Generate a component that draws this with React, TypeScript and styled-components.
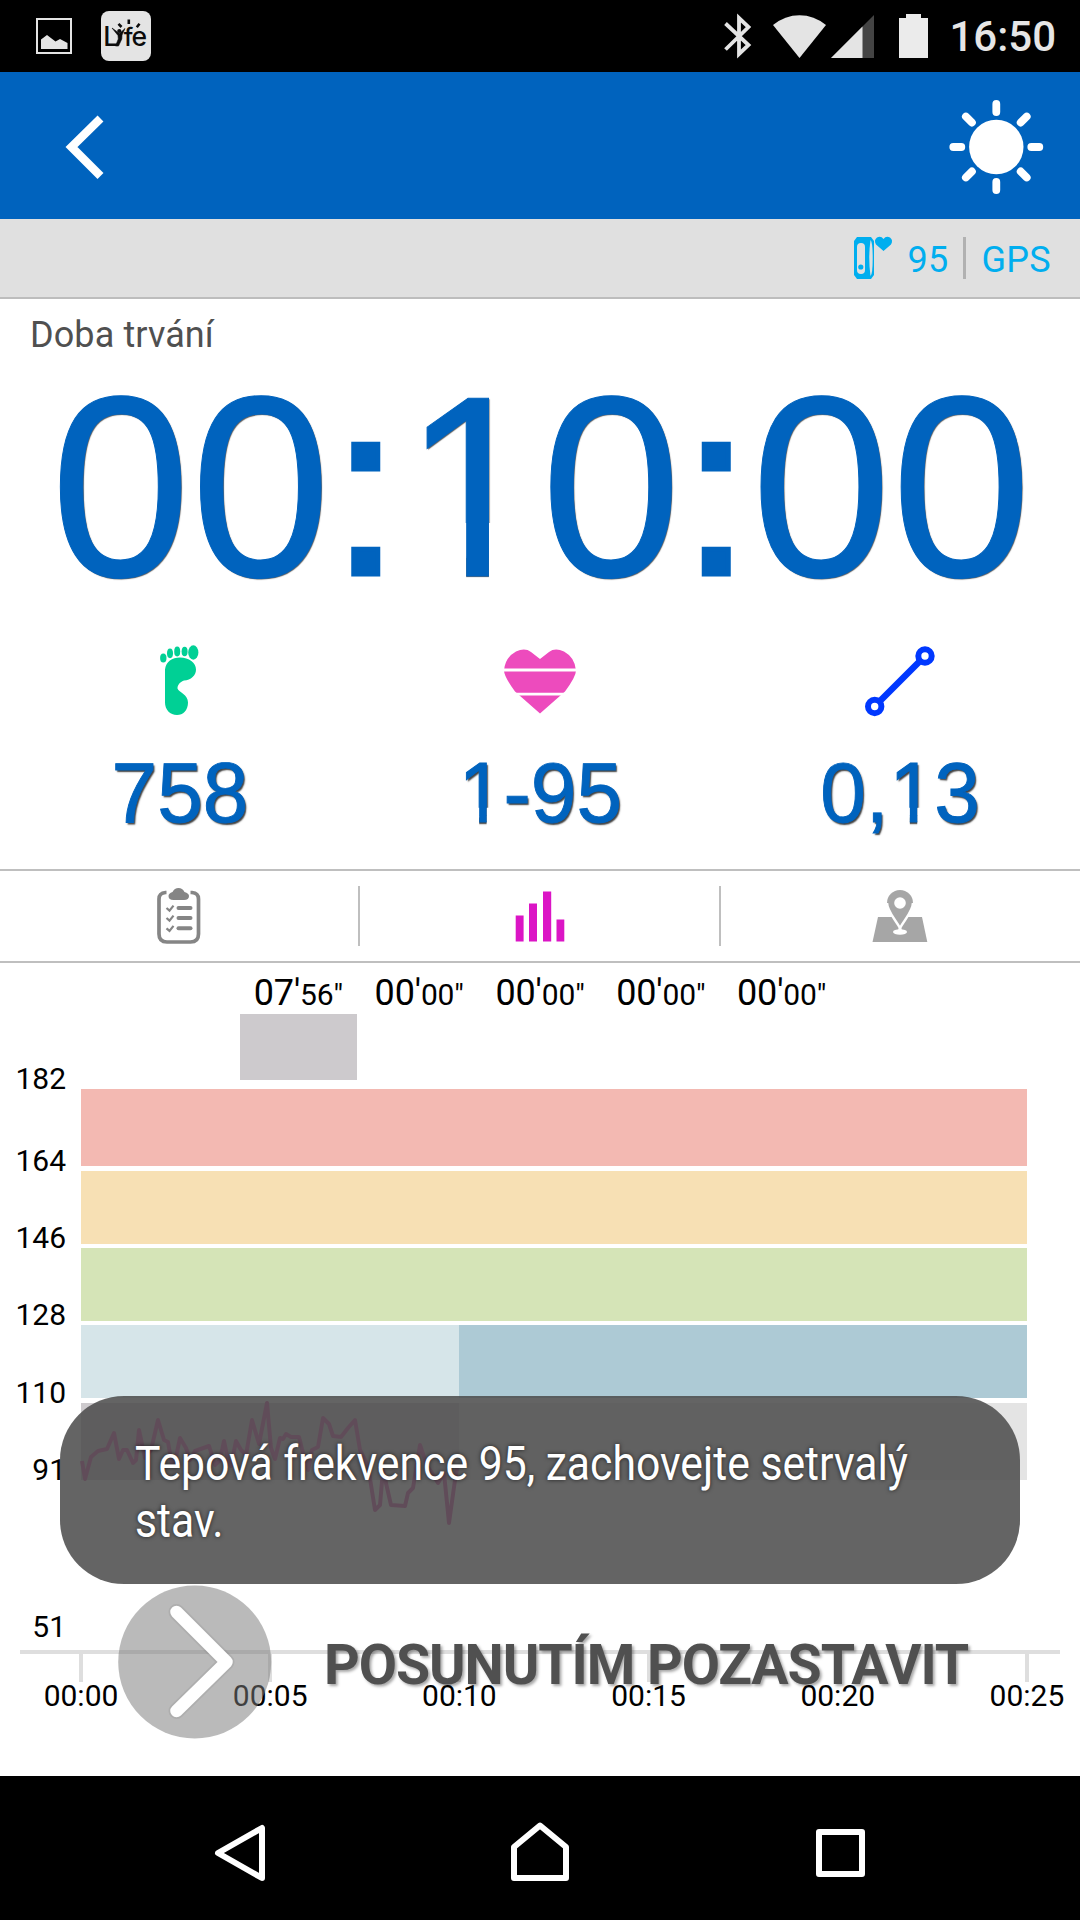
import React from "react";
import styled, { createGlobalStyle } from "styled-components";

const GlobalStyle = createGlobalStyle`
  * { box-sizing: border-box; }
  body { margin: 0; background: #fff; }
  svg { display: block; flex: none; overflow: visible; }
`;

const Screen = styled.div`
  position: relative;
  width: 1080px;
  height: 1920px;
  display: flex;
  flex-direction: column;
  overflow: hidden;
  background: #fff;
  color: #000;
  font-family: Roboto, "Noto Sans", sans-serif;
`;

const StatusBar = styled.header`
  height: 72px;
  flex: none;
  display: flex;
  align-items: center;
  justify-content: space-between;
  padding: 0 24px 0 36px;
  background: #000;
`;

const StatusGroup = styled.div<{ $gap: number }>`
  display: flex;
  align-items: center;
  gap: ${(p) => p.$gap}px;
`;

const SignalSlot = styled.div`
  margin-left: 5px;
`;

const Clock = styled.span`
  margin-left: 21px;
  padding-top: 2px;
  font-size: 42px;
  line-height: 50px;
  font-weight: 500;
  color: #e6e6e6;
`;

const AppBar = styled.div`
  height: 147px;
  flex: none;
  display: flex;
  align-items: center;
  justify-content: space-between;
  padding: 3px 36px 0 66px;
  background: #0063be;
`;

const IconButton = styled.button`
  border: 0;
  padding: 0;
  background: none;
`;

const SensorBar = styled.div`
  height: 80px;
  flex: none;
  display: flex;
  align-items: center;
  justify-content: flex-end;
  padding-right: 29px;
  border-bottom: 2px solid #bdbdbd;
  background: #e0e0e0;
  color: #00aeef;
`;

const SensorText = styled.span`
  padding-top: 3px;
  font-size: 36px;
  line-height: 42px;
  letter-spacing: 0.3px;
`;

const SensorReading = styled(SensorText)`
  margin-left: 14px;
`;

const SensorDivider = styled.i`
  width: 3px;
  height: 42px;
  margin: 0 15px;
  background: #b1b1b1;
`;

const DurationLabel = styled.div`
  height: 72px;
  flex: none;
  padding-left: 30px;
  font-size: 36px;
  line-height: 72px;
  letter-spacing: 0.1px;
  color: #505050;
`;

const Duration = styled.div`
  height: 236px;
  flex: none;
  padding-left: 2px;
  text-align: center;
  white-space: nowrap;
  font-family: "Liberation Sans", Arial, sans-serif;
  font-size: 252px;
  line-height: 236px;
  color: #0063be;
  -webkit-text-stroke: 1px #0063be;
  text-shadow: 1px 1px 1px rgba(0, 0, 0, 0.65);
  transform: scaleY(1.025);
  transform-origin: 50% 205px;
`;

const Colon = styled.span`
  display: inline-block;
  line-height: inherit;
  -webkit-text-stroke-width: 5px;
  transform: translateY(-2px) scaleY(0.95);
  transform-origin: 50% 205px;
`;

/* The "one" is trimmed to a plain stem without its base bar. */
const One = styled.span`
  display: inline-block;
  line-height: inherit;
  clip-path: polygon(0 0, 100% 0, 100% 65%, 61.4% 65%, 61.4% 110%, 45.2% 110%, 45.2% 65%, 0 65%);
  transform: translateX(0.008em);
`;

const Metrics = styled.section`
  height: 262px;
  flex: none;
  display: grid;
  grid-template-columns: repeat(3, 1fr);
  padding-top: 38px;
`;

const Metric = styled.div`
  display: flex;
  flex-direction: column;
  align-items: center;
  gap: 31px;
`;

const MetricValue = styled.span`
  font-family: "Liberation Sans", Arial, sans-serif;
  font-size: 82px;
  line-height: 96px;
  color: #0063be;
  -webkit-text-stroke: 0.9px #0063be;
  text-shadow: 1.5px 2px 1.5px rgba(0, 0, 0, 0.75);
  transform: scaleY(1.04);
  transform-origin: 50% 76px;
`;

const Tabs = styled.nav`
  height: 94px;
  flex: none;
  display: grid;
  grid-template-columns: 358px 2px 359px 2px 358px;
  align-items: center;
  justify-items: center;
  border-top: 2px solid #bfbfbf;
  border-bottom: 2px solid #bfbfbf;
`;

const TabDivider = styled.i`
  width: 2px;
  height: 60px;
  background: #bfbfbf;
`;

const Chart = styled.section`
  position: relative;
  flex: 1;
  display: flex;
  flex-direction: column;
`;

const ZoneTimes = styled.div`
  height: 126px;
  flex: none;
  display: grid;
  grid-template-columns: repeat(5, 120.8px);
  padding-left: 238px;
`;

const ZoneTime = styled.div`
  display: flex;
  flex-direction: column;
  align-items: center;
`;

const ZoneText = styled.span`
  height: 51px;
  font-size: 36px;
  line-height: 60px;
  letter-spacing: -0.15px;
  white-space: nowrap;
`;

const Seconds = styled.span`
  font-size: 30px;
`;

const ZoneBar = styled.i<{ $height: number }>`
  width: 117px;
  height: ${(p) => p.$height}px;
  background: #cdcacd;
`;

const ZoneRow = styled.div<{ $height: number }>`
  height: ${(p) => p.$height}px;
  flex: none;
  display: grid;
  grid-template-columns: 66px 946px;
  column-gap: 15px;
  align-items: start;
`;

const AxisLabel = styled.span`
  margin-top: -25px;
  text-align: right;
  font-size: 30px;
  line-height: 30px;
`;

const Band = styled.div<{ $height: number; $color: string; $elapsed: string }>`
  height: ${(p) => p.$height}px;
  background: linear-gradient(90deg, ${(p) => p.$elapsed} 378px, ${(p) => p.$color} 378px);
`;

const HeartTrace = styled.svg`
  position: absolute;
  left: 0;
  top: 437px;
`;

const TimeAxis = styled.div`
  display: flex;
  justify-content: space-between;
  margin: 0 20px;
  padding: 0 33px 0 61px;
  border-top: 4px solid #dedede;
`;

const Tick = styled.div`
  width: 0;
  display: flex;
  flex-direction: column;
  align-items: center;
  font-size: 30px;
  line-height: 28px;

  &::before {
    content: "";
    flex: none;
    width: 4px;
    height: 28px;
    background: #dedede;
  }
`;

const SlideToPause = styled.div`
  position: absolute;
  left: 118px;
  top: 1585px;
  display: flex;
  align-items: center;
`;

const SlideText = styled.span`
  margin-left: 52px;
  padding-top: 7px;
  font-size: 55.5px;
  line-height: 66px;
  font-weight: 700;
  letter-spacing: -1.05px;
  white-space: nowrap;
  color: #505050;
  text-shadow: 2px 2px 3px rgba(0, 0, 0, 0.35);
`;

const Toast = styled.div`
  position: absolute;
  left: 60px;
  top: 1396px;
  width: 960px;
  height: 188px;
  padding: 39px 75px;
  border-radius: 64px;
  background: rgba(77, 77, 77, 0.87);
`;

const ToastText = styled.p`
  margin: 0;
  width: 900px;
  font-size: 48px;
  line-height: 57px;
  color: #fff;
  text-shadow: 0 0 5px rgba(0, 0, 0, 0.7);
  transform: scaleX(0.8895);
  transform-origin: 0 0;
`;

const NavBar = styled.footer`
  height: 144px;
  flex: none;
  display: flex;
  align-items: center;
  justify-content: space-between;
  padding: 8px 214px 0 214px;
  background: #000;
`;

const zoneTimes = [
  { min: "07", sec: "56", height: 66 },
  { min: "00", sec: "00", height: 0 },
  { min: "00", sec: "00", height: 0 },
  { min: "00", sec: "00", height: 0 },
  { min: "00", sec: "00", height: 0 },
];

const zones = [
  { bpm: 182, row: 82, band: 77, color: "#f3b9b2", elapsed: "#f3b9b2" },
  { bpm: 164, row: 77, band: 73, color: "#f7e0b4", elapsed: "#f7e0b4" },
  { bpm: 146, row: 77, band: 73, color: "#d5e4b7", elapsed: "#d5e4b7" },
  { bpm: 128, row: 78, band: 73, color: "#adcad5", elapsed: "#d6e5e9" },
  { bpm: 110, row: 77, band: 77, color: "#e4e4e4", elapsed: "#cdcacd" },
  { bpm: 91, row: 157, band: 0, color: "#fff", elapsed: "#fff" },
  { bpm: 51, row: 13, band: 0, color: "#fff", elapsed: "#fff" },
];

const ticks = ["00:00", "00:05", "00:10", "00:15", "00:20", "00:25"];

const trace =
  "82,1461 85,1479 91,1457 98,1451 107,1449 114,1433 119,1459 123,1450 127,1450 133,1463 136,1460 139,1430 145,1458 151,1450 158,1420 164,1440 168,1442 172,1465 176,1457 180,1438 186,1448 190,1460 195,1451 209,1446 215,1465 220,1460 224,1441 228,1460 231,1466 236,1441 241,1450 246,1455 252,1420 259,1444 267,1403 271,1448 275,1459 280,1438 283,1439 286,1434 291,1437 299,1437 303,1453 308,1470 312,1450 318,1447 323,1418 329,1424 333,1436 341,1437 348,1428 355,1420 360,1450 368,1466 375,1510 380,1505 383,1470 391,1505 405,1506 408,1493 413,1488 420,1445 427,1466 432,1473 438,1483 444,1473 449,1523 455,1480 457,1468";

const GalleryIcon = () => (
  <svg width="36" height="36" viewBox="36 18 36 36">
    <rect x="37" y="19" width="34" height="34" fill="none" stroke="#e4e4e4" strokeWidth="2" />
    <path d="M41 49V39.5L47 35L55.5 41.5L60 39L67.5 43V49Z" fill="#e4e4e4" />
  </svg>
);

const LyfeIcon = () => (
  <svg width="50" height="50" viewBox="101 11 50 50">
    <rect x="101" y="11" width="50" height="50" rx="8" fill="#e4e4e4" />
    <g fontFamily="Inter, sans-serif" fontWeight="500" fill="#0c0c0c">
      <text x="103.3" y="46" fontSize="26.5">L</text>
      <text x="123.8" y="46" fontSize="25">f</text>
      <text x="131.5" y="46" fontSize="26.5">e</text>
    </g>
    <path d="M112 28L118 35.5L118.3 39L115.5 46H118.5L121.8 39L122 35L125 28.5L119.5 33.5Z" fill="#0c0c0c" stroke="#0c0c0c" strokeWidth="0.6" />
    <circle cx="119.3" cy="31" r="2.1" fill="#0c0c0c" />
    <path d="M128.8 19.5V24M118.5 23.8L121.5 27M139.5 23.8L136.8 27.2" stroke="#0c0c0c" strokeWidth="2.6" />
  </svg>
);

const BluetoothIcon = () => (
  <svg width="29" height="44" viewBox="723 14 29 44">
    <path d="M725.5 23.5L748.5 45L739 54V18L748.5 27L725.5 49.5" fill="none" stroke="#e4e4e4" strokeWidth="3.8" />
  </svg>
);

const WifiIcon = () => (
  <svg width="53" height="43" viewBox="773 14 53 43">
    <path d="M773 24Q785 14.2 799.5 14.2T826 24L799.5 57Z" fill="#e4e4e4" />
  </svg>
);

const SignalIcon = () => (
  <svg width="43" height="43" viewBox="831 14 43 43">
    <path d="M831 57L874 14V57Z" fill="#444" />
    <path d="M831 57L862.5 25.5V57Z" fill="#e4e4e4" />
  </svg>
);

const BatteryIcon = () => (
  <svg width="29" height="44" viewBox="899 14 29 44">
    <path d="M906 14H921V18H928V58H899V18H906Z" fill="#ebebeb" />
  </svg>
);

const BackIcon = () => (
  <svg width="38" height="64" viewBox="66 115 38 64">
    <path d="M100.5 118.5L71.5 147L100.5 176" fill="none" stroke="#fff" strokeWidth="8.4" />
  </svg>
);

const SunIcon = () => (
  <svg width="96" height="96" viewBox="-48.3 -48 96 96" stroke="#fff" strokeWidth="7.8" strokeLinecap="round">
    <circle r="27.2" fill="#fff" stroke="none" />
    {[0, 90, 180, 270].map((a) => (
      <path key={a} d="M0 -43V-35" transform={`rotate(${a})`} />
    ))}
    {[45, 135, 225, 315].map((a) => (
      <path key={a} d="M0 -43V-34.5" transform={`rotate(${a})`} />
    ))}
  </svg>
);

const BandIcon = () => (
  <svg width="40" height="42" viewBox="854 237 40 42" fill="#00aeef">
    <path d="M858 237H872L875 241V275L872 279H858L855 275V241Z" />
    <rect x="858" y="243" width="8" height="31" rx="4" fill="#e0e0e0" />
    <circle cx="861.8" cy="267" r="2.6" />
    <path d="M871.5 240Q869 258 871.5 276Q873.7 274 873.7 258T871.5 240Z" fill="#e0e0e0" />
    <path d="M884.5 251L877 244.5Q874.5 240 878 237.5Q882 235.5 884.5 239Q887 235.5 891 237.5Q894.5 240 892 244.5Z" />
  </svg>
);

const FootIcon = () => (
  <svg width="40" height="70" viewBox="160 645.5 40 70" fill="#00d095">
    <ellipse cx="163.3" cy="658.5" rx="3.2" ry="4.6" />
    <ellipse cx="170" cy="653.8" rx="3" ry="4.9" />
    <ellipse cx="177.2" cy="652" rx="3" ry="4.9" />
    <ellipse cx="184.6" cy="652" rx="3" ry="4.8" />
    <ellipse cx="193.3" cy="653" rx="5.1" ry="7.2" />
    <path d="M165 670C166 662 172 658 180 658C189 658 196 663 196 670C196 676 191 680.5 184 681C179 683 177.5 686 177.5 689C179 693 188 695 188 703C188 711 183 715.5 177 715.5C170 715.5 165 710 165 703Z" />
  </svg>
);

const HeartIcon = () => (
  <svg width="74" height="70" viewBox="503 645.5 74 70">
    <path d="M540 714L515 692Q504 677 504 671Q505 658 516 652Q525 648 531 652.5L540 659.5L549 652.5Q555 648 564 652Q575 658 576 671Q576 677 565 692Z" fill="#ed4bbd" />
    <path d="M503 670.5H577M503 694.7H577" stroke="#fff" strokeWidth="2.8" />
  </svg>
);

const DistanceIcon = () => (
  <svg width="72" height="70" viewBox="864.5 645 72 70" fill="none" stroke="#0038ff">
    <path d="M880 701.5L920.5 661" strokeWidth="6.6" />
    <circle cx="925.5" cy="656" r="6.7" strokeWidth="6" />
    <circle cx="875.2" cy="706.5" r="6.7" strokeWidth="6" />
  </svg>
);

const ChecklistIcon = () => (
  <svg width="46" height="58" viewBox="156.5 887 46 58" fill="none" stroke="#858585">
    <path d="M167 892.5H166Q159.5 893 159.5 899V934Q159.5 942 167.5 942H191Q199 942 199 934V899Q199 893 192.5 892.5H191" strokeWidth="3.7" />
    <path d="M169 896Q169 893.5 173 892Q175 888 179 888T185 892Q189.5 893.5 189.5 896Q189.5 900 184.5 900H174Q169 900 169 896Z" fill="#858585" stroke="none" />
    {[908, 918, 928.3].map((y) => (
      <g key={y}>
        <path d={`M179 ${y}H191`} strokeWidth="4" strokeLinecap="round" />
        <path d={`M167 ${y}l3 2.6l4 -5`} strokeWidth="2.2" />
      </g>
    ))}
  </svg>
);

const BarsIcon = () => (
  <svg width="50" height="52" viewBox="515 890.5 50 52" fill="#db15c5">
    <path d="M515.7 916H523.6V942H515.7ZM529 904H537V942H529ZM543 892H551.2V942H543ZM556.5 920H564.3V942H556.5Z" />
  </svg>
);

const MapIcon = () => (
  <svg width="56" height="54" viewBox="872 889 56 54" fill="#a6a6a6">
    <path d="M878 917H922L927.3 942H872.5Z" />
    <path
      d="M900 928C895 919 887 911 887 902.5A13 12.5 0 0 1 913 902.5C913 911 905 919 900 928Z"
      stroke="#fff"
      strokeWidth="2.4"
    />
    <path d="M887 903A13 13 0 0 1 913 903" />
    <circle cx="900" cy="903" r="5.8" fill="#fff" />
    <ellipse cx="900" cy="932" rx="7" ry="2.7" fill="#fff" />
    <path d="M899 926H901L902 931H898Z" fill="#fff" />
  </svg>
);

const SlideHandle = () => (
  <svg width="154" height="154" viewBox="0 0 154 154" fill="none">
    <circle cx="76.7" cy="77" r="76.5" fill="#7b7b7b" fillOpacity="0.52" />
    <path d="M58.5 27L108.5 77L58.5 126" stroke="#6e6e6e" strokeOpacity="0.15" strokeWidth="16" strokeLinecap="round" strokeLinejoin="round" />
    <path d="M58.5 27L108.5 77L58.5 126" stroke="#fff" strokeWidth="12.5" strokeLinecap="round" strokeLinejoin="round" />
  </svg>
);

export default function App() {
  return (
    <Screen>
      <GlobalStyle />
      <StatusBar>
        <StatusGroup $gap={29}>
          <GalleryIcon />
          <LyfeIcon />
        </StatusGroup>
        <StatusGroup $gap={0}>
          <StatusGroup $gap={21}>
            <BluetoothIcon />
            <WifiIcon />
          </StatusGroup>
          <StatusGroup $gap={25}>
            <SignalSlot>
              <SignalIcon />
            </SignalSlot>
            <BatteryIcon />
          </StatusGroup>
          <Clock>16:50</Clock>
        </StatusGroup>
      </StatusBar>

      <AppBar>
        <IconButton aria-label="Zpět">
          <BackIcon />
        </IconButton>
        <IconButton aria-label="Jas">
          <SunIcon />
        </IconButton>
      </AppBar>

      <SensorBar>
        <BandIcon />
        <SensorReading>95</SensorReading>
        <SensorDivider />
        <SensorText>GPS</SensorText>
      </SensorBar>

      <DurationLabel>Doba trvání</DurationLabel>
      <Duration>
        00<Colon>:</Colon>
        <One>1</One>0<Colon>:</Colon>00
      </Duration>

      <Metrics>
        <Metric>
          <FootIcon />
          <MetricValue>758</MetricValue>
        </Metric>
        <Metric>
          <HeartIcon />
          <MetricValue>
            <One>1</One>-95
          </MetricValue>
        </Metric>
        <Metric>
          <DistanceIcon />
          <MetricValue>
            0,<One>1</One>3
          </MetricValue>
        </Metric>
      </Metrics>

      <Tabs>
        <ChecklistIcon />
        <TabDivider />
        <BarsIcon />
        <TabDivider />
        <MapIcon />
      </Tabs>

      <Chart>
        <ZoneTimes>
          {zoneTimes.map((z, i) => (
            <ZoneTime key={i}>
              <ZoneText>
                {z.min}'<Seconds>{z.sec}"</Seconds>
              </ZoneText>
              <ZoneBar $height={z.height} />
            </ZoneTime>
          ))}
        </ZoneTimes>
        {zones.map((z) => (
          <ZoneRow key={z.bpm} $height={z.row}>
            <AxisLabel>{z.bpm}</AxisLabel>
            <Band $height={z.band} $color={z.color} $elapsed={z.elapsed} />
          </ZoneRow>
        ))}
        <TimeAxis>
          {ticks.map((t) => (
            <Tick key={t}>{t}</Tick>
          ))}
        </TimeAxis>
        <HeartTrace width="480" height="140" viewBox="0 1400 480 140">
          <polyline points={trace} fill="none" stroke="#e04ba8" strokeWidth="4" strokeLinejoin="round" />
        </HeartTrace>
      </Chart>

      <NavBar>
        <svg width="50" height="60" viewBox="214 1822 50 60" fill="none" stroke="#fff" strokeWidth="6" strokeLinejoin="round">
          <path d="M262 1828V1878L218 1853Z" />
        </svg>
        <svg width="58" height="60" viewBox="511 1822 58 60" fill="none" stroke="#fff" strokeWidth="6" strokeLinejoin="round">
          <path d="M514 1878V1847L540 1825.5L566 1847V1878Z" />
        </svg>
        <svg width="50" height="50" viewBox="816 1827 50 50" fill="none" stroke="#fff" strokeWidth="6" strokeLinejoin="round">
          <path d="M819 1832H862V1874H819Z" />
        </svg>
      </NavBar>

      <SlideToPause>
        <SlideHandle />
        <SlideText>POSUNUTÍM POZASTAVIT</SlideText>
      </SlideToPause>

      <Toast>
        <ToastText>Tepová frekvence 95, zachovejte setrvalý stav.</ToastText>
      </Toast>
    </Screen>
  );
}
